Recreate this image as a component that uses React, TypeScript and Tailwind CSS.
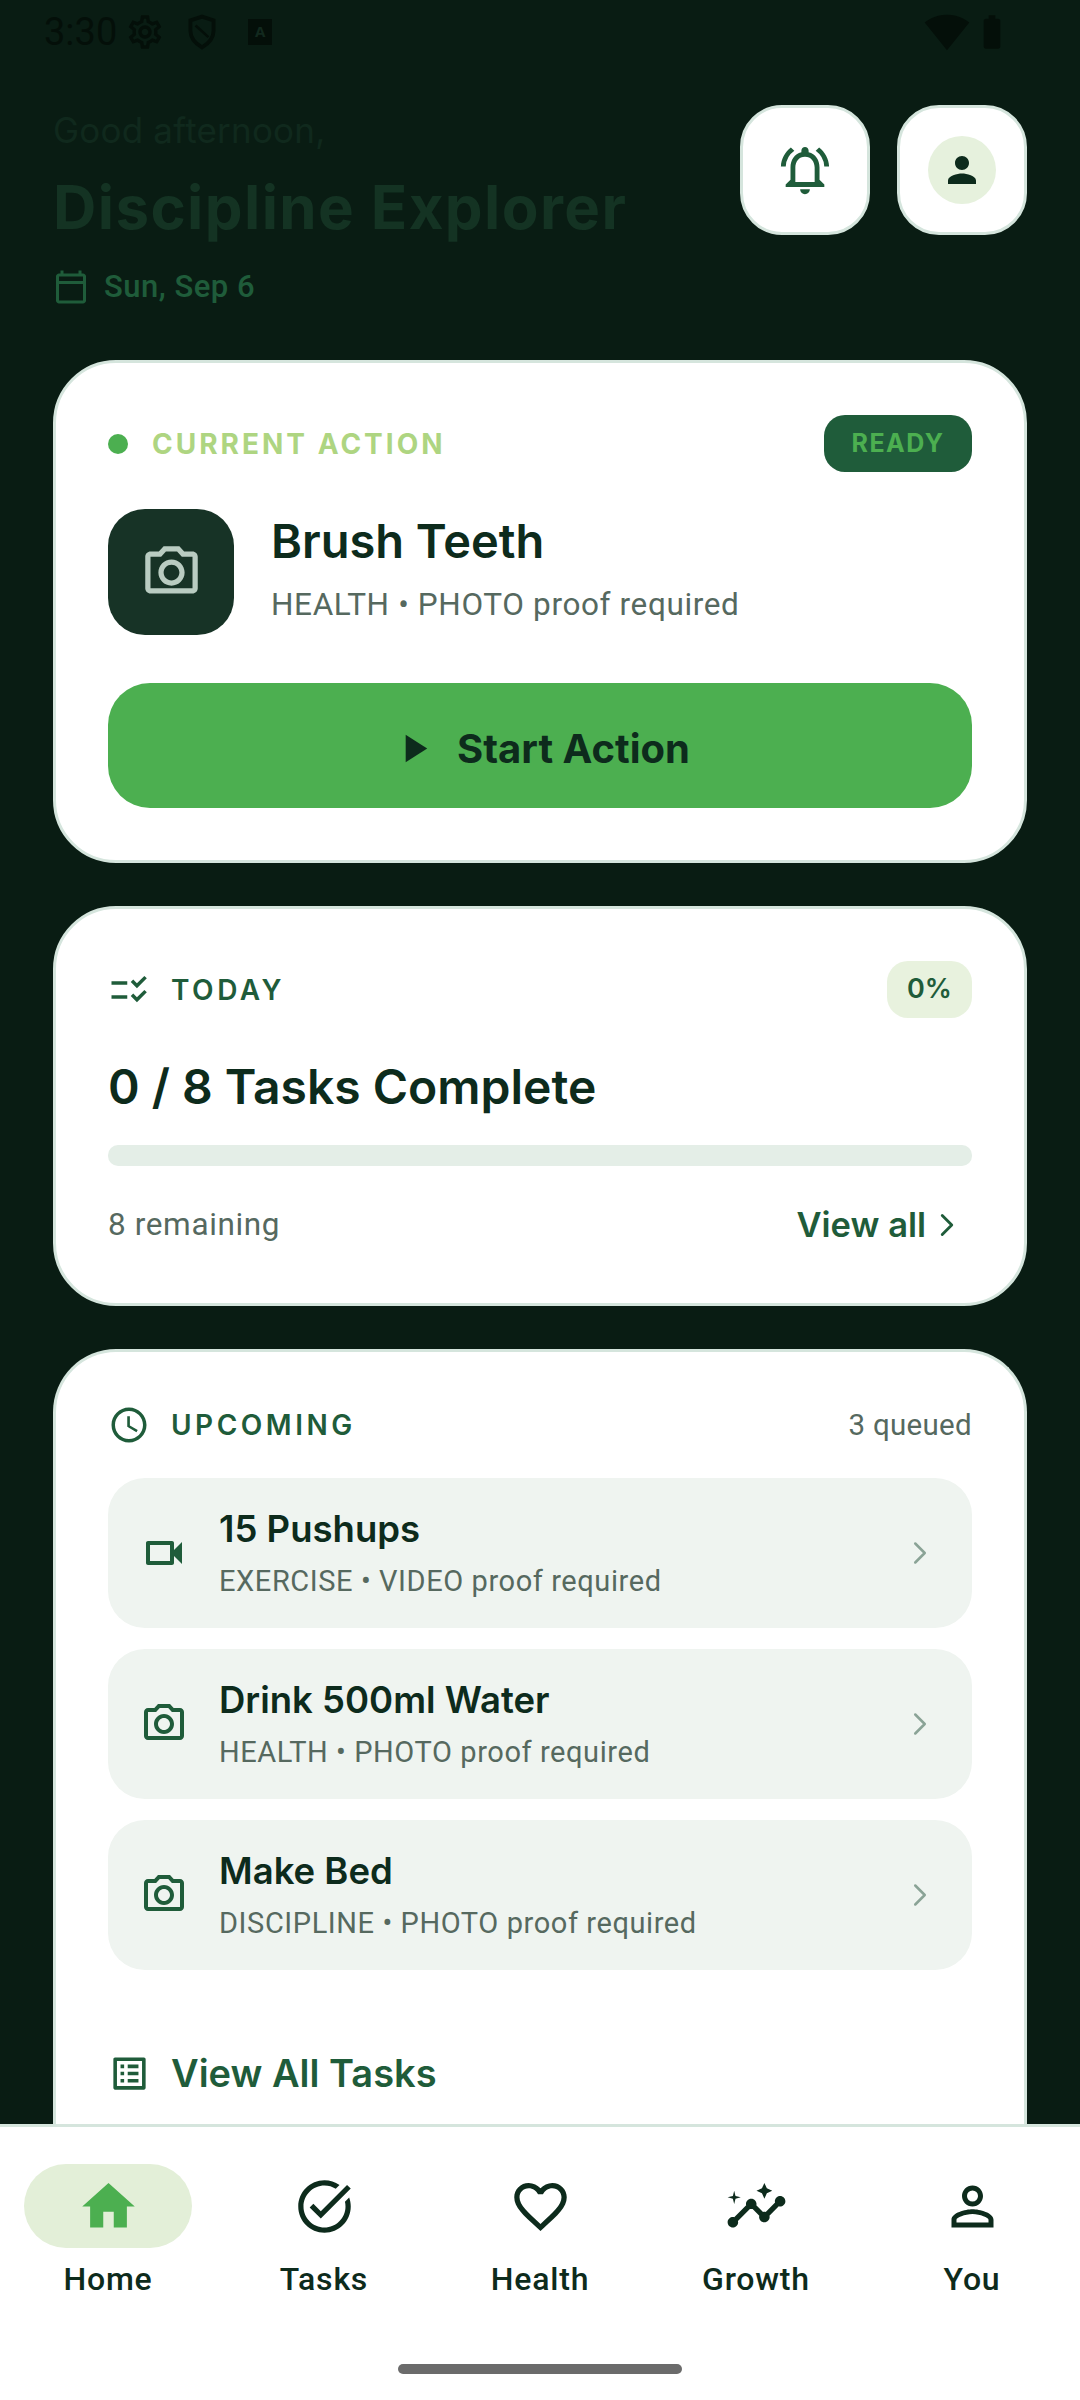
import {
  MdBatteryFull,
  MdFavoriteBorder,
  MdHome,
  MdOutlineCalendarToday,
  MdOutlineInsights,
  MdOutlineListAlt,
  MdOutlineNotificationsActive,
  MdOutlinePhotoCamera,
  MdOutlineSchedule,
  MdOutlineSettings,
  MdOutlineTaskAlt,
  MdOutlineVideocam,
  MdPerson,
  MdPersonOutline,
  MdPlayArrow,
  MdSignalWifi4Bar,
} from 'react-icons/md';
import { ChevronRight } from 'lucide-react';

const HEAD = "font-['Inter',sans-serif]";
const BODY = "font-['Roboto',sans-serif]";

const upcoming = [
  { title: '15 Pushups', sub: 'EXERCISE • VIDEO proof required', Icon: MdOutlineVideocam },
  { title: 'Drink 500ml Water', sub: 'HEALTH • PHOTO proof required', Icon: MdOutlinePhotoCamera },
  { title: 'Make Bed', sub: 'DISCIPLINE • PHOTO proof required', Icon: MdOutlinePhotoCamera },
];

const navItems = [
  { label: 'Home', Icon: MdHome, active: true },
  { label: 'Tasks', Icon: MdOutlineTaskAlt, active: false },
  { label: 'Health', Icon: MdFavoriteBorder, active: false },
  { label: 'Growth', Icon: MdOutlineInsights, active: false },
  { label: 'You', Icon: MdPersonOutline, active: false },
];

function StatusBar() {
  return (
    <div className="flex h-[63px] shrink-0 items-center justify-between pl-[44px] pr-[68px] text-[#040f09]">
      <div className="flex items-center">
        <span className={`${BODY} text-[38px] leading-none`}>3:30</span>
        <MdOutlineSettings size={40} className="ml-[8px]" />
        <svg viewBox="0 0 24 28" className="ml-[21px] h-[36px] w-[32px]" fill="none" stroke="currentColor" strokeWidth="3">
          <path d="M12 2 3 5v8c0 6 4 10 9 13 5-3 9-7 9-13V5z" />
          <path d="M7 9l10 9" strokeWidth="2" />
        </svg>
        <div className="ml-[30px] flex h-[26px] w-[24px] items-center justify-center bg-[#040f09] text-[15px] font-bold leading-none text-[#12291e]">
          A
        </div>
      </div>
      <div className="flex items-center">
        <MdSignalWifi4Bar size={46} />
        <MdBatteryFull size={40} className="ml-[2px]" />
      </div>
    </div>
  );
}

function Header() {
  return (
    <div className="mt-[42px] flex h-[255px] shrink-0 items-start justify-between px-[53px]">
      <div>
        <div className={`${HEAD} h-[50px] text-[35px] leading-[50px] tracking-[0.2px] text-[#10291d]`}>Good afternoon,</div>
        <div className={`${HEAD} mt-[10px] h-[84px] text-[60px] font-bold leading-[84px] tracking-[1.4px] text-[#143323]`}>Discipline Explorer</div>
        <div className="mt-[14px] flex h-[48px] items-center">
          <MdOutlineCalendarToday size={36} className="text-[#1f5c3a]" />
          <span className={`${BODY} ml-[15px] text-[31px] font-medium tracking-[0.5px] text-[#1f5c3a]`}>Sun, Sep 6</span>
        </div>
      </div>
      <div className="flex gap-[27px]">
        <button className="flex h-[130px] w-[130px] items-center justify-center rounded-[42px] border-[3px] border-[#d5e5dd] bg-white">
          <MdOutlineNotificationsActive size={58} className="text-[#1f5c3a]" />
        </button>
        <button className="flex h-[130px] w-[130px] items-center justify-center rounded-[42px] border-[3px] border-[#d5e5dd] bg-white">
          <div className="flex h-[68px] w-[68px] items-center justify-center rounded-full bg-[#e6f1dd]">
            <MdPerson size={42} className="text-[#0d2b1c]" />
          </div>
        </button>
      </div>
    </div>
  );
}

function CurrentAction() {
  return (
    <section className="shrink-0 rounded-[63px] border-[3px] border-[#d5e5dd] bg-white p-[52px]">
      <div className="flex h-[57px] items-center justify-between">
        <div className="flex items-center">
          <span className="h-[20px] w-[20px] rounded-full bg-[#4caf50]" />
          <span className={`${HEAD} ml-[24px] text-[28px] font-bold tracking-[3px] text-[#aed581]`}>CURRENT ACTION</span>
        </div>
        <div className={`${HEAD} flex h-[57px] w-[148px] items-center justify-center rounded-[21px] bg-[#1f5c3a] text-[25px] font-bold tracking-[1.5px] text-[#4caf50]`}>
          READY
        </div>
      </div>
      <div className="mt-[37px] flex items-center">
        <div className="flex h-[126px] w-[126px] items-center justify-center rounded-[37px] bg-[#173326]">
          <MdOutlinePhotoCamera size={63} className="text-[#b9ccc1]" />
        </div>
        <div className="ml-[37px] pb-[6px]">
          <div className={`${HEAD} text-[47px] font-semibold leading-[60px] text-[#0d2b1c]`}>Brush Teeth</div>
          <div className={`${BODY} mt-[12px] text-[31.5px] leading-[44px] tracking-[0.63px] text-[#56695f]`}>HEALTH • PHOTO proof required</div>
        </div>
      </div>
      <button className="mt-[48px] flex h-[125px] w-full items-center justify-center rounded-[42px] bg-[#4caf50] pt-[6px]">
        <MdPlayArrow size={47} className="text-[#0d2b1c]" />
        <span className={`${HEAD} ml-[20px] text-[40px] font-bold text-[#0d2b1c]`}>Start Action</span>
      </button>
    </section>
  );
}

function Today() {
  return (
    <section className="shrink-0 rounded-[63px] border-[3px] border-[#d5e5dd] bg-white p-[52px]">
      <div className="flex h-[57px] items-center justify-between">
        <div className="flex items-center">
          {/* checklist with the lines on the left */}
          <svg viewBox="0 0 24 24" className="h-[42px] w-[42px] text-[#1f5c3a]" fill="currentColor">
            <path d="M11 7H2v2h9V7zm0 8H2v2h9v-2z" />
            <path d="M16.54 11 13 7.46l1.41-1.41 2.12 2.12 4.24-4.24 1.41 1.41L16.54 11zm0 8L13 15.46l1.41-1.41 2.12 2.12 4.24-4.24 1.41 1.41L16.54 19z" />
          </svg>
          <span className={`${HEAD} ml-[21px] text-[28px] font-semibold tracking-[3.5px] text-[#1f5c3a]`}>TODAY</span>
        </div>
        <div className={`${HEAD} flex h-[57px] w-[85px] items-center justify-center rounded-[21px] bg-[#e8f2de] text-[27px] font-semibold text-[#1f5c3a]`}>
          0%
        </div>
      </div>
      <div className={`${HEAD} mt-[39px] h-[60px] text-[48px] font-semibold leading-[60px] text-[#0d2b1c]`}>0 / 8 Tasks Complete</div>
      <div className="mt-[28px] h-[21px] rounded-[10px] bg-[#e4eee7]" />
      <div className="mt-[33px] flex h-[52px] items-center justify-between">
        <span className={`${BODY} text-[31.5px] tracking-[0.63px] text-[#56695f]`}>8 remaining</span>
        <span className="flex items-center">
          <span className={`${HEAD} text-[34.5px] font-semibold text-[#1f5c3a]`}>View all</span>
          <ChevronRight size={38} strokeWidth={1.8} className="ml-[2px] mr-[6px] text-[#1f5c3a]" />
        </span>
      </div>
    </section>
  );
}

function Upcoming() {
  return (
    <section className="shrink-0 rounded-t-[63px] border-[3px] border-b-0 border-[#d5e5dd] bg-white px-[52px] pt-[52px] pb-[60px]">
      <div className="flex h-[42px] items-center justify-between">
        <div className="flex items-center">
          <MdOutlineSchedule size={42} className="text-[#1f5c3a]" />
          <span className={`${HEAD} ml-[21px] text-[28px] font-semibold tracking-[3.5px] text-[#1f5c3a]`}>UPCOMING</span>
        </div>
        <span className={`${BODY} text-[29.5px] tracking-[0.3px] text-[#56695f]`}>3 queued</span>
      </div>
      <div className="mt-[32px] flex flex-col gap-[21px]">
        {upcoming.map(({ title, sub, Icon }) => (
          <div key={title} className="flex h-[150px] items-center rounded-[37px] bg-[#eff4f0] pl-[32px] pr-[33px]">
            <Icon size={48} className="shrink-0 text-[#1f5c3a]" />
            <div className="ml-[31px] flex-1">
              <div className={`${HEAD} text-[36.5px] font-semibold leading-[46px] text-[#0d2b1c]`}>{title}</div>
              <div className={`${BODY} mt-[9px] text-[29px] leading-[40px] tracking-[0.58px] text-[#56695f]`}>{sub}</div>
            </div>
            <ChevronRight size={38} strokeWidth={1.6} className="shrink-0 text-[#8aa396]" />
          </div>
        ))}
      </div>
      <div className="mt-[78px] flex h-[50px] items-center">
        <MdOutlineListAlt size={43} className="text-[#1f5c3a]" />
        <span className={`${HEAD} ml-[20px] text-[38px] font-semibold text-[#1f5c3a]`}>View All Tasks</span>
      </div>
    </section>
  );
}

function BottomNav() {
  return (
    <nav className="shrink-0 border-t-[3px] border-[#d5e5dd] bg-white pt-[37px] pb-[26px]">
      <div className="grid grid-cols-5">
        {navItems.map(({ label, Icon, active }) => (
          <div key={label} className="flex flex-col items-center">
            <div className={`flex h-[84px] w-[168px] items-center justify-center rounded-[42px] ${active ? 'bg-[#e3efd8]' : ''}`}>
              <Icon size={63} className={active ? 'text-[#4caf50]' : 'text-[#0d2b1c]'} />
            </div>
            <span className={`${BODY} mt-[11px] h-[40px] text-[32px] font-medium leading-[40px] tracking-[0.8px] text-[#0d2b1c]`}>{label}</span>
          </div>
        ))}
      </div>
      <div className="mx-auto mt-[65px] h-[10px] w-[284px] rounded-full bg-[#6b6b6b]" />
    </nav>
  );
}

export default function App() {
  return (
    <div className="flex h-[2400px] w-[1080px] flex-col overflow-hidden bg-[#091c13]">
      <StatusBar />
      <Header />
      <main className="flex min-h-0 flex-1 flex-col gap-[43px] overflow-hidden px-[53px]">
        <CurrentAction />
        <Today />
        <Upcoming />
      </main>
      <BottomNav />
    </div>
  );
}
